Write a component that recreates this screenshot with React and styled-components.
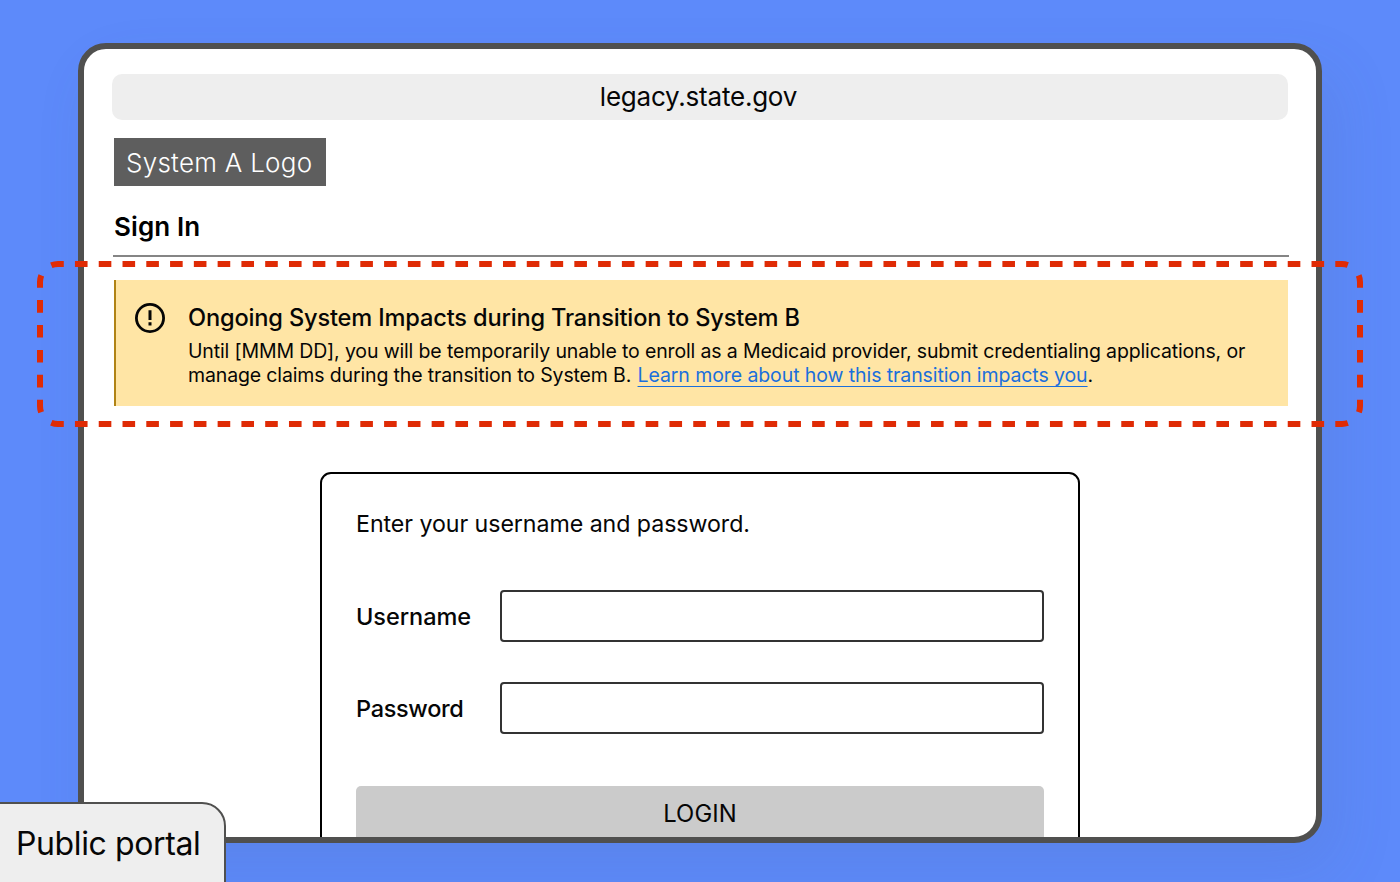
import React from 'react';
import styled, { createGlobalStyle } from 'styled-components';

const GlobalStyle = createGlobalStyle`
  * { box-sizing: border-box; }
  body {
    margin: 0;
    color: #060606;
    font-family: Inter, "Liberation Sans", sans-serif;
    overflow: hidden;
  }
`;

const Stage = styled.div`
  position: relative;
  width: 1400px;
  height: 882px;
  padding: 43px 78px 39px;
  background: #5d8afa;
  overflow: hidden;
`;

const Browser = styled.main`
  height: 800px;
  padding: 25px 28px 0;
  display: flex;
  flex-direction: column;
  background: #fff;
  border: 6px solid #50504f;
  border-radius: 28px;
  box-shadow: 16px 28px 60px rgba(70, 90, 140, 0.12);
  overflow: hidden;
`;

const AddressBar = styled.div`
  flex: none;
  height: 46px;
  padding: 0 3px 2px 0;
  display: flex;
  align-items: center;
  justify-content: center;
  background: #eee;
  border-radius: 10px;
  font-size: 26px;
  font-weight: 400;
  letter-spacing: -0.22px;
`;

const Logo = styled.div`
  flex: none;
  align-self: flex-start;
  width: 212px;
  height: 48px;
  margin: 18px 0 0 2px;
  padding: 0 12px;
  display: flex;
  align-items: center;
  background: #5e5e5e;
  color: #fff;
  font-size: 26px;
  font-weight: 300;
  letter-spacing: 0.27px;
  white-space: nowrap;
`;

const PageTitle = styled.h1`
  flex: none;
  height: 71px;
  margin: 0 -1px 0 1px;
  padding: 24px 0 0 1px;
  border-bottom: 2px solid #858585;
  color: #000;
  font-size: 26px;
  line-height: 34px;
  font-weight: 600;
  letter-spacing: 0.1px;
`;

const Alert = styled.section`
  flex: none;
  height: 126px;
  margin: 23px 0 0 2px;
  padding: 22px 0 0 18px;
  display: flex;
  background: #ffe5a5;
  border-left: 2px solid #b08316;
`;

const AlertIcon = styled.svg`
  flex: none;
  width: 32px;
  height: 32px;
  margin-right: 22px;
`;

const AlertTitle = styled.h2`
  margin: 0;
  font-size: 23.6px;
  line-height: 32px;
  font-weight: 500;
  letter-spacing: -0.16px;
`;

const AlertText = styled.p`
  margin: 5px 0 0;
  font-size: 19.5px;
  line-height: 24px;
  font-weight: 400;
  letter-spacing: -0.14px;
  white-space: nowrap;
`;

const Link = styled.a`
  margin-left: 1px;
  color: #1a6fdc;
  letter-spacing: -0.09px;
  text-decoration: underline;
  text-decoration-thickness: 1px;
  text-underline-offset: 4px;
  text-decoration-skip-ink: none;
`;

const LoginCard = styled.form`
  flex: none;
  align-self: center;
  width: 760px;
  height: 420px;
  margin-top: 66px;
  padding: 34px;
  display: flex;
  flex-direction: column;
  border: 2px solid #000;
  border-radius: 11px;
`;

const Prompt = styled.p`
  margin: 0 0 42px;
  font-size: 23.2px;
  line-height: 32px;
  font-weight: 400;
  letter-spacing: -0.06px;
`;

const Field = styled.label`
  display: grid;
  grid-template-columns: 144px 1fr;
  align-items: center;
  margin-top: ${(p) => (p.$first ? 8 : 40)}px;
  font-size: 23.5px;
  font-weight: 500;
  letter-spacing: ${(p) => (p.$first ? -0.05 : -0.32)}px;
`;

const Input = styled.input`
  width: 100%;
  height: 52px;
  padding: 0 14px;
  background: #fff;
  border: 2px solid #333;
  border-radius: 4px;
  font: inherit;
`;

const Submit = styled.button`
  height: 56px;
  margin-top: 52px;
  padding: 0 0 2px;
  background: #cbcbcb;
  border: 0;
  border-radius: 5px;
  color: #060606;
  font-family: inherit;
  font-size: 23.8px;
  font-weight: 400;
  letter-spacing: 0.1px;
`;

const Highlight = styled.svg`
  position: absolute;
  inset: 0;
  pointer-events: none;
`;

const Tag = styled.div`
  position: absolute;
  left: -2px;
  bottom: -2px;
  width: 228px;
  height: 82px;
  padding: 1px 0 0 16px;
  display: flex;
  align-items: center;
  background: #eee;
  border: 2px solid #50504f;
  border-top-right-radius: 24px;
  font-size: 32px;
  font-weight: 400;
  letter-spacing: -0.38px;
  white-space: nowrap;
`;

export default function App() {
  return (
    <>
      <GlobalStyle />
      <Stage>
        <Browser>
          <AddressBar>legacy.state.gov</AddressBar>
          <Logo>System A Logo</Logo>
          <PageTitle>Sign In</PageTitle>
          <Alert>
            <AlertIcon viewBox="0 0 32 32" aria-hidden="true">
              <circle cx="16" cy="16" r="13.6" fill="none" stroke="#060606" strokeWidth="2.8" />
              <path d="M14.5 8.3h3v9.6h-3zM14.5 20.3h3v3.2h-3z" fill="#060606" />
            </AlertIcon>
            <div>
              <AlertTitle>Ongoing System Impacts during Transition to System B</AlertTitle>
              <AlertText>
                Until [MMM DD], you will be temporarily unable to enroll as a Medicaid provider, submit credentialing applications, or
                <br />
                manage claims during the transition to System B. <Link>Learn more about how this transition impacts you</Link>.
              </AlertText>
            </div>
          </Alert>
          <LoginCard>
            <Prompt>Enter your username and password.</Prompt>
            <Field $first>
              Username
              <Input type="text" />
            </Field>
            <Field>
              Password
              <Input type="password" />
            </Field>
            <Submit type="button">LOGIN</Submit>
          </LoginCard>
        </Browser>
        <Highlight width="1400" height="882" fill="none" stroke="#df2b05" strokeWidth="6" aria-hidden="true">
          <g strokeDasharray="12.6 11.18">
            <path d="M51.3 265.3A18 18 0 0 1 58 264H1342A18 18 0 0 1 1348.7 265.3" />
            <path d="M51.3 422.7A18 18 0 0 0 58 424H1342A18 18 0 0 0 1348.7 422.7" />
          </g>
          <g strokeDasharray="12.6 12.3">
            <path d="M41.3 275.3A18 18 0 0 0 40 282V406A18 18 0 0 0 41.3 412.7" />
            <path d="M1358.7 275.3A18 18 0 0 1 1360 282V406A18 18 0 0 1 1358.7 412.7" />
          </g>
        </Highlight>
        <Tag>Public portal</Tag>
      </Stage>
    </>
  );
}
